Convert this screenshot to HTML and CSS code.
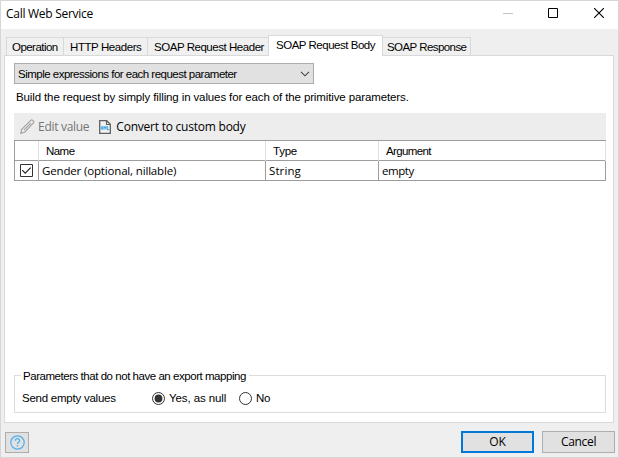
FILE: index.html
```html
<!DOCTYPE html>
<html lang="en">
<head>
<meta charset="utf-8">
<title>Call Web Service</title>
<link rel="stylesheet" href="styles.css">
</head>
<body>
<div class="window">
  <header class="titlebar">
    <h1 class="title">Call Web Service</h1>
    <div class="controls">
      <svg class="ctl" width="10" height="11" viewBox="0 0 10 11"><path d="M0 5.5h10" stroke="#c4c4c4"/></svg>
      <svg class="ctl" width="10" height="10" viewBox="0 0 10 10"><path d="M.5 .5h9v9h-9z" fill="none" stroke="#000"/></svg>
      <svg class="ctl" width="10" height="10" viewBox="0 0 10 10"><path d="M0 0l10 10M10 0L0 10" stroke="#000" stroke-width="1.1"/></svg>
    </div>
  </header>
  <nav class="tabs">
    <div class="tab tab-operation">Operation</div>
    <div class="tab tab-http">HTTP Headers</div>
    <div class="tab tab-header">SOAP Request Header</div>
    <div class="tab tab-body active">SOAP Request Body</div>
    <div class="tab tab-response">SOAP Response</div>
  </nav>
  <main class="panel">
    <div class="select"><span>Simple expressions for each request parameter</span>
      <svg width="10" height="6" viewBox="0 0 10 6"><path d="M1 .8l4 4 4-4" fill="none" stroke="#444" stroke-width="1.1"/></svg>
    </div>
    <p class="hint">Build the request by simply filling in values for each of the primitive parameters.</p>
    <div class="toolbar">
      <svg class="pencil" width="15" height="15" viewBox="0 0 15 15"><path d="M.8 14.2l.9-3.9L11 1.1q.8-.6 1.7.2l.8.8q.8.8.1 1.6L4.7 13.2zM3.8 11.2L10.8 4.2" fill="none" stroke="#a0a0a0" stroke-width="1.1"/></svg>
      <span class="edit">Edit value</span>
      <svg class="file" width="12" height="14" viewBox="0 0 12 14"><path d="M.7.7h7l3.6 3.6v9H.7z" fill="#f2f2f2" stroke="#606060" stroke-width="1.3"/><path d="M7.5.8v3.7h3.7" fill="none" stroke="#606060" stroke-width="1.2"/><path d="M2 6.2l2 3.5M4 6.2L2 9.7M5 9.7V6.3l1 2 1-2v3.4M8.4 6v3.7h1.8" fill="none" stroke="#35a5e8" stroke-width="1"/></svg>
      <span class="convert">Convert to custom body</span>
    </div>
    <div class="table">
      <div class="row head">
        <div class="cell"></div><div class="cell name">Name</div><div class="cell type">Type</div><div class="cell argument">Argument</div>
      </div>
      <div class="row data">
        <div class="cell check"><svg width="13" height="13" viewBox="0 0 13 13"><path d="M.5.5h12v12H.5z" fill="#fff" stroke="#333"/><path d="M2.3 6.2l2.9 2.9 5.5-5.5" fill="none" stroke="#222" stroke-width="1.2"/></svg></div>
        <div class="cell gender">Gender (optional, nillable)</div><div class="cell string">String</div><div class="cell empty">empty</div>
      </div>
    </div>
    <section class="group">
      <div class="legend">Parameters that do not have an export mapping</div>
      <div class="options">
        <span class="send">Send empty values</span>
        <svg width="13" height="13" viewBox="0 0 13 13"><circle cx="6.5" cy="6.5" r="6" fill="#fff" stroke="#333"/><circle cx="6.5" cy="6.5" r="3.9" fill="#333"/></svg>
        <span class="yes">Yes, as null</span>
        <svg width="13" height="13" viewBox="0 0 13 13"><circle cx="6.5" cy="6.5" r="6" fill="#fff" stroke="#333"/></svg>
        <span class="no">No</span>
      </div>
    </section>
  </main>
  <footer class="footer">
    <div class="button help"><svg width="15" height="15" viewBox="0 0 15 15"><circle cx="7.5" cy="7.5" r="6.7" fill="none" stroke="#4fb0ee" stroke-width="1.2"/><path d="M5.4 5.8c0-2.8 4.2-2.8 4.2-.1 0 1.6-2.1 1.5-2.1 3.3M7.5 10v1.4" fill="none" stroke="#4fb0ee" stroke-width="1.3"/></svg></div>
    <div class="button ok">OK</div>
    <div class="button cancel">Cancel</div>
  </footer>
</div>
</body>
</html>
```
FILE: styles.css
```css
* { box-sizing: border-box; }
body { margin: 0; background: #fff; color: #000; font: 11.5px/16px "Liberation Sans", Arial, sans-serif; white-space: nowrap; }
svg { display: block; flex: none; }
.window { width: 619px; height: 458px; border: 1px solid #d6d6d6; background: #efefef; display: flex; flex-direction: column; }
.titlebar { height: 28px; background: #fff; display: flex; justify-content: space-between; padding-left: 5px; }
.title { margin: 4px 0 0; font: 12px/17px "Open Sans", sans-serif; letter-spacing: -.28px; }
.controls { display: flex; gap: 36px; padding: 7px 14px 0 0; }
.controls .ctl:first-child { margin-right: -1px; }

.tabs { height: 26px; display: flex; align-items: flex-end; padding-left: 5px; }
.tab { height: 18px; border: 1px solid #d9d9d9; border-bottom: 0; border-right: 0; padding: 1px 0 0 5px; background: #f0f0f0; }
.tab-operation { width: 57px; letter-spacing: -.54px; }
.tab-http { width: 84px; padding-left: 6px; letter-spacing: -.42px; }
.tab-header { width: 121px; padding-left: 6px; letter-spacing: -.46px; }
.tab-body { width: 115px; padding: 1px 0 0 7px; letter-spacing: -.48px; border-right: 1px solid #d9d9d9; }
.tab-response { width: 88px; padding-left: 4px; letter-spacing: -.56px; border-left: 0; border-right: 1px solid #d9d9d9; }
.tab.active { height: 21px; margin-bottom: -1px; background: #fff; position: relative; }

.panel { width: 610px; height: 368px; margin-left: 3px; border: 1px solid #d9d9d9; background: #fff; padding: 7px 7px 0 9px; display: flex; flex-direction: column; }
.select { width: 300px; height: 21px; flex: none; border: 1px solid #adadad; background: #e1e1e1; display: flex; align-items: center; justify-content: space-between; padding: 0 3px; letter-spacing: -.51px; }
.hint { margin: 5px 0 8px 2px; line-height: 16px; letter-spacing: -.12px; }
.toolbar { width: 592px; height: 27px; flex: none; background: #ededed; display: flex; align-items: center; padding-left: 6px; font: 12px/16px "Open Sans", sans-serif; }
.edit { margin-left: 3px; color: #757575; letter-spacing: -.29px; }
.file { margin-left: 10px; }
.convert { margin-left: 5px; letter-spacing: -.23px; }

.table { width: 592px; height: 41px; flex: none; border-top: 1px solid #9d9d9d; }
.row { display: grid; grid-template-columns: 25px 227px 113px 227px; }
.head { height: 19px; }
.cell { border-right: 1px solid #e0e0e0; padding-left: 7px; line-height: 20px; }
.row .cell:first-child { border-left: 1px solid #9d9d9d; }
.data { height: 21px; border-top: 1px solid #9d9d9d; border-bottom: 1px solid #9d9d9d; font: 500 11.5px/20px "Open Sans", sans-serif; }
.data .cell { border-right-color: #9d9d9d; line-height: 20px; padding-left: 3px; }
.data .check { padding: 3px 0 0 5px; }
.name { letter-spacing: -.54px; }
.type { letter-spacing: -.25px; }
.argument { letter-spacing: -.64px; }
.gender { letter-spacing: -.16px; }
.string { letter-spacing: .1px; }
.empty { letter-spacing: -.45px; padding-left: 4px; }

.group { width: 592px; height: 38px; flex: none; margin: auto 0 9px; border: 1px solid #dcdcdc; }
.legend { width: max-content; height: 16px; margin: -8px 0 0 6px; padding: 0 3px 0 2px; background: #fff; letter-spacing: -.46px; }
.options { display: flex; align-items: center; height: 16px; margin-top: 6px; }
.send { width: 137px; padding-left: 7px; letter-spacing: -.24px; }
.yes { width: 74px; padding-left: 4px; letter-spacing: -.1px; }
.no { padding-left: 4px; letter-spacing: -.3px; }

.footer { display: flex; padding: 8px 3px 0 4px; }
.button { height: 22px; border: 1px solid #adadad; background: #e1e1e1; display: flex; align-items: center; justify-content: center; font: 12px/16px "Open Sans", sans-serif; letter-spacing: -.32px; }
.help { width: 24px; height: 21px; margin-top: 1px; }
.ok { width: 73px; margin-left: auto; margin-right: 8px; border: 2px solid #0078d7; letter-spacing: 0; }
.cancel { width: 73px; }
```
